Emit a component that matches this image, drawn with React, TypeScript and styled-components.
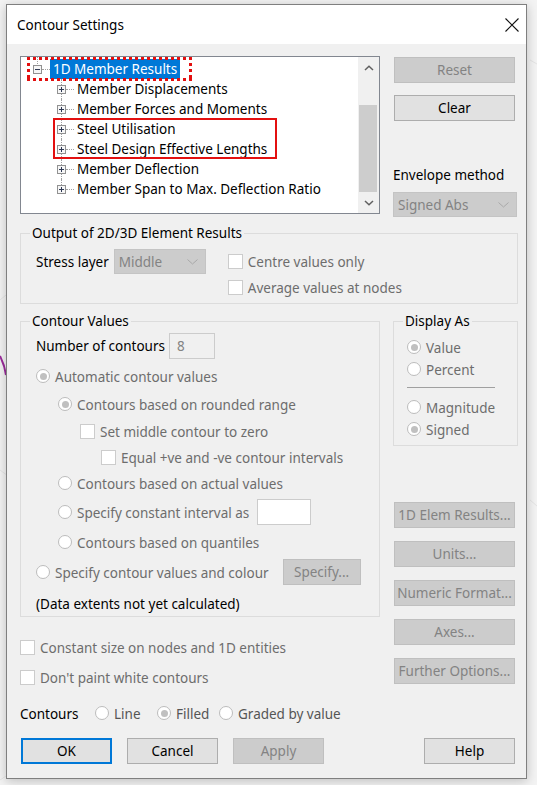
import styled, { createGlobalStyle, css } from "styled-components"

const GlobalStyle = createGlobalStyle`
  html, body {
    margin: 0;
    padding: 0;
  }
  body {
    background: #f3f3f3;
    font-family: "Noto Sans", "Open Sans", sans-serif;
    font-size: 13.5px;
    color: #000;
  }
  * {
    box-sizing: border-box;
  }
`

const treeItems = [
  "Member Displacements",
  "Member Forces and Moments",
  "Steel Utilisation",
  "Steel Design Effective Lengths",
  "Member Deflection",
  "Member Span to Max. Deflection Ratio",
]

const Expander = ({ open }: { open?: boolean }) => (
  <ExpanderBox width="9" height="9" viewBox="0 0 9 9">
    <rect x="0.5" y="0.5" width="8" height="8" fill="#f6f6f6" stroke="#919191" />
    <path d="M2 4.5h5" stroke="#2f3a55" />
    {!open && <path d="M4.5 2v5" stroke="#2f3a55" />}
  </ExpanderBox>
)

const Chevron = ({ up }: { up?: boolean }) => (
  <svg width="10" height="6" viewBox="0 0 10 6">
    <path
      d={up ? "M1 5L5 1.2L9 5" : "M1 1L5 4.8L9 1"}
      fill="none"
      stroke="#606060"
      strokeWidth="1.5"
    />
  </svg>
)

const SelectArrow = () => (
  <svg width="11" height="6" viewBox="0 0 11 6">
    <path d="M0.5 0.5L5.5 5L10.5 0.5" fill="none" stroke="#a8a8a8" strokeWidth="1" />
  </svg>
)

type OptionProps = {
  label: string
  checked?: boolean
  indent?: number
  h?: number
  width?: number
  dim?: boolean
  children?: React.ReactNode
}

const RadioOption = ({ label, checked, indent = 0, h = 22, width, dim = true, children }: OptionProps) => (
  <OptionRow $indent={indent} $h={h} $width={width}>
    <RadioMark $checked={checked} />
    <OptionText $dim={dim}>{label}</OptionText>
    {children}
  </OptionRow>
)

const CheckOption = ({ label, indent = 0, h = 20 }: OptionProps) => (
  <OptionRow $indent={indent} $h={h}>
    <CheckMark />
    <OptionText $dim>{label}</OptionText>
  </OptionRow>
)

export default function App() {
  return (
    <>
      <GlobalStyle />
      <Page>
        <Backdrop width="537" height="785" viewBox="0 0 537 785">
          <path d="M0 300L60 250M0 470L40 500M530 60L537 64M530 500L537 506M0 780L30 760" stroke="#e4e4e4" />
          <path d="M0 356C3 362 5 368 6 375" fill="none" stroke="#9a2b9a" strokeWidth="2" />
        </Backdrop>
        <Dialog>
          <TitleBar>
            <Title>Contour Settings</Title>
            <svg width="14" height="14" viewBox="0 0 14 14">
              <path d="M0.5 0.5L13.5 13.5M13.5 0.5L0.5 13.5" stroke="#111" strokeWidth="1.1" />
            </svg>
          </TitleBar>
          <Body>
            <TopRow>
              <Tree>
                <TreeList>
                  <TreeRow $indent={12} $root>
                    <Expander open />
                    <Connector />
                    <TreeLabel $selected>1D Member Results</TreeLabel>
                  </TreeRow>
                  {treeItems.map((item, i) => (
                    <TreeRow key={item} $indent={36} $last={i === treeItems.length - 1}>
                      <Expander />
                      <Connector />
                      <TreeLabel>{item}</TreeLabel>
                    </TreeRow>
                  ))}
                </TreeList>
                <ScrollBar>
                  <ScrollArrow>
                    <Chevron up />
                  </ScrollArrow>
                  <ScrollTrack>
                    <ScrollThumb />
                  </ScrollTrack>
                  <ScrollArrow>
                    <Chevron />
                  </ScrollArrow>
                </ScrollBar>
                <DottedMark />
                <BoxMark />
              </Tree>
              <SideColumn>
                <DlgButton disabled>Reset</DlgButton>
                <DlgButton $mt={12}>Clear</DlgButton>
                <FieldLabel $mt={44}>Envelope method</FieldLabel>
                <Select $w={124} $h={25} $mt={7}>
                  <span>Signed Abs</span>
                  <SelectArrow />
                </Select>
              </SideColumn>
            </TopRow>

            <OutputGroup>
              <Legend>Output of 2D/3D Element Results</Legend>
              <OutputContent>
                <StressRow>
                  <FieldLabel>Stress layer</FieldLabel>
                  <Select $w={92} $h={25}>
                    <span>Middle</span>
                    <SelectArrow />
                  </Select>
                </StressRow>
                <CheckColumn>
                  <CheckOption label="Centre values only" />
                  <CheckOption label="Average values at nodes" />
                </CheckColumn>
              </OutputContent>
            </OutputGroup>

            <MiddleRow>
              <LeftColumn>
                <ContourGroup>
                  <Legend>Contour Values</Legend>
                  <ContourContent>
                    <NumberRow>
                      <FieldLabel>Number of contours</FieldLabel>
                      <NumberBox>8</NumberBox>
                    </NumberRow>
                    <RadioOption label="Automatic contour values" checked />
                    <RadioOption label="Contours based on rounded range" checked indent={22} />
                    <CheckOption label="Set middle contour to zero" indent={44} />
                    <CheckOption label="Equal +ve and -ve contour intervals" indent={65} />
                    <RadioOption label="Contours based on actual values" indent={22} h={20} />
                    <RadioOption label="Specify constant interval as" indent={22} h={26}>
                      <IntervalBox />
                    </RadioOption>
                    <RadioOption label="Contours based on quantiles" indent={22} />
                    <RadioOption label="Specify contour values and colour" h={26}>
                      <SpecifyButton disabled>Specify...</SpecifyButton>
                    </RadioOption>
                    <NoteText>(Data extents not yet calculated)</NoteText>
                  </ContourContent>
                </ContourGroup>

                <BottomChecks>
                  <CheckOption label="Constant size on nodes and 1D entities" />
                  <CheckOption label="Don't paint white contours" />
                </BottomChecks>

                <ContoursRow>
                  <ContoursLabel>Contours</ContoursLabel>
                  <RadioOption label="Line" width={62} dim={false} />
                  <RadioOption label="Filled" checked width={62} dim={false} />
                  <RadioOption label="Graded by value" dim={false} />
                </ContoursRow>
              </LeftColumn>

              <SideColumn>
                <DisplayGroup>
                  <Legend>Display As</Legend>
                  <DisplayContent>
                    <RadioOption label="Value" checked />
                    <RadioOption label="Percent" />
                    <Separator />
                    <RadioOption label="Magnitude" />
                    <RadioOption label="Signed" checked />
                  </DisplayContent>
                </DisplayGroup>
                <DlgButton disabled $mt={56}>1D Elem Results...</DlgButton>
                <DlgButton disabled $mt={13}>Units...</DlgButton>
                <DlgButton disabled $mt={13}>Numeric Format...</DlgButton>
                <DlgButton disabled $mt={13}>Axes...</DlgButton>
                <DlgButton disabled $mt={13}>Further Options...</DlgButton>
              </SideColumn>
            </MiddleRow>

            <ButtonBar>
              <FooterButton $default>OK</FooterButton>
              <FooterButton>Cancel</FooterButton>
              <FooterButton disabled>Apply</FooterButton>
              <FooterButton $push>Help</FooterButton>
            </ButtonBar>
          </Body>
        </Dialog>
      </Page>
    </>
  )
}

const Page = styled.div`
  position: relative;
  width: 537px;
  height: 785px;
  overflow: hidden;
  padding: 4px 0 0 6px;
`

const Backdrop = styled.svg`
  position: absolute;
  left: 0;
  top: 0;
`

const Dialog = styled.div`
  position: relative;
  width: 521px;
  border: 1px solid #7f7f7f;
  background: #f0f0f0;
  box-shadow: 0 2px 10px rgba(0, 0, 0, 0.22);
`

const TitleBar = styled.div`
  height: 39px;
  background: #fff;
  display: flex;
  align-items: center;
  justify-content: space-between;
  padding: 0 7px 0 10px;
`

const Title = styled.div`
  font-size: 13.5px;
`

const Body = styled.div`
  padding: 12px 8px 14px 13px;
`

const TopRow = styled.div`
  display: flex;
  gap: 13px;
  align-items: flex-start;
`

const Tree = styled.div`
  position: relative;
  width: 360px;
  height: 158px;
  border: 1px solid #828790;
  background: #fff;
  display: flex;
`

const TreeList = styled.div`
  flex: 1;
  padding-top: 2px;
`

const TreeRow = styled.div<{ $indent: number; $root?: boolean; $last?: boolean }>`
  position: relative;
  height: 20px;
  display: flex;
  align-items: center;
  padding-left: ${(p) => p.$indent}px;
  white-space: nowrap;

  &::before {
    content: "";
    position: absolute;
    border-left: 1px dotted #a0a0a0;
    ${(p) =>
      p.$root
        ? css`
            left: 16px;
            top: -2px;
            height: 7px;
          `
        : css`
            left: 40px;
            top: 0;
            height: ${p.$last ? "10px" : "20px"};
          `}
  }
`

const ExpanderBox = styled.svg`
  position: relative;
  z-index: 1;
  flex-shrink: 0;
`

const Connector = styled.span`
  width: 8px;
  border-top: 1px dotted #a0a0a0;
`

const TreeLabel = styled.span<{ $selected?: boolean }>`
  height: 20px;
  line-height: 21px;
  padding: 0 3px;
  ${(p) =>
    p.$selected &&
    css`
      background: #0078d7;
      color: #fff;
    `}
`

const ScrollBar = styled.div`
  width: 21px;
  background: #f0f0f0;
  display: flex;
  flex-direction: column;
`

const ScrollArrow = styled.div`
  height: 21px;
  display: flex;
  align-items: center;
  justify-content: center;
`

const ScrollTrack = styled.div`
  flex: 1;
  display: flex;
  padding: 27px 2px 0 1px;
`

const ScrollThumb = styled.div`
  flex: 1;
  background: #cdcdcd;
`

const dots = (dir: string) =>
  `repeating-linear-gradient(${dir}, #e30f0f 0 3px, transparent 3px 6px)`

const DottedMark = styled.div`
  position: absolute;
  left: 6px;
  top: 0;
  width: 165px;
  height: 24px;
  pointer-events: none;
  background:
    ${dots("90deg")} top left / 100% 3px no-repeat,
    ${dots("90deg")} bottom left / 100% 3px no-repeat,
    ${dots("180deg")} top left / 3px 100% no-repeat,
    ${dots("180deg")} top right / 3px 100% no-repeat;
`

const BoxMark = styled.div`
  position: absolute;
  left: 32px;
  top: 61px;
  width: 224px;
  height: 41px;
  border: 2px solid #e31010;
  pointer-events: none;
`

const SideColumn = styled.div`
  width: 125px;
  display: flex;
  flex-direction: column;
  padding-top: 1px;
`

const buttonBase = css`
  font-family: inherit;
  font-size: 13.5px;
  padding: 0;
  white-space: nowrap;
  background: #e1e1e1;
  border: 1px solid #adadad;
  color: #000;

  &:disabled {
    background: #cccccc;
    border-color: #bfbfbf;
    color: #838383;
  }
`

const DlgButton = styled.button<{ $mt?: number }>`
  ${buttonBase}
  width: 121px;
  height: 26px;
  margin: ${(p) => p.$mt ?? 0}px 0 0 1px;
`

const FieldLabel = styled.div<{ $mt?: number }>`
  height: 20px;
  line-height: 21px;
  margin-top: ${(p) => p.$mt ?? 0}px;
  white-space: nowrap;
`

const Select = styled.div<{ $w: number; $h: number; $mt?: number }>`
  width: ${(p) => p.$w}px;
  height: ${(p) => p.$h}px;
  margin-top: ${(p) => p.$mt ?? 0}px;
  background: #cccccc;
  border: 1px solid #c4c4c4;
  color: #838383;
  display: flex;
  align-items: center;
  justify-content: space-between;
  padding: 0 7px 0 4px;
`

const Group = styled.fieldset`
  margin: 0;
  padding: 0;
  min-width: 0;
  border: 1px solid #dcdcdc;
`

const Legend = styled.legend`
  margin-left: 9px;
  padding: 0 2px;
  line-height: 16px;
  font-size: 13.5px;
`

const OutputGroup = styled(Group)`
  margin-top: 8px;
`

const OutputContent = styled.div`
  display: flex;
  align-items: flex-start;
  padding: 8px 0 6px 15px;
`

const StressRow = styled.div`
  display: flex;
  align-items: center;
  gap: 5px;
  height: 25px;
`

const CheckColumn = styled.div`
  display: flex;
  flex-direction: column;
  gap: 6px;
  margin: 2px 0 0 22px;
`

const OptionRow = styled.div<{ $indent: number; $h: number; $width?: number }>`
  display: flex;
  align-items: center;
  gap: 5px;
  height: ${(p) => p.$h}px;
  padding-left: ${(p) => p.$indent}px;
  white-space: nowrap;
  ${(p) =>
    p.$width &&
    css`
      width: ${p.$width}px;
    `}
`

const RadioMark = styled.span<{ $checked?: boolean }>`
  width: 14px;
  height: 14px;
  flex-shrink: 0;
  border: 1px solid #bcbcbc;
  border-radius: 50%;
  background: #fff;
  display: flex;
  align-items: center;
  justify-content: center;

  &::after {
    content: "";
    width: 7px;
    height: 7px;
    border-radius: 50%;
    background: ${(p) => (p.$checked ? "#c0c0c0" : "transparent")};
  }
`

const CheckMark = styled.span`
  width: 15px;
  height: 15px;
  flex-shrink: 0;
  border: 1px solid #cccccc;
  background: #fff;
`

const OptionText = styled.span<{ $dim?: boolean }>`
  color: ${(p) => (p.$dim ? "#6d6d6d" : "#555")};
  padding-top: 1px;
`

const MiddleRow = styled.div`
  display: flex;
  gap: 13px;
  margin-top: 9px;
  align-items: flex-start;
`

const LeftColumn = styled.div`
  width: 360px;
  display: flex;
  flex-direction: column;
`

const ContourGroup = styled(Group)``

const ContourContent = styled.div`
  display: flex;
  flex-direction: column;
  gap: 6px;
  padding: 4px 0 1px 15px;
`

const NumberRow = styled.div`
  display: flex;
  align-items: center;
  gap: 4px;
  height: 26px;
`

const NumberBox = styled.div`
  width: 46px;
  height: 26px;
  border: 1px solid #cccccc;
  background: #f0f0f0;
  color: #838383;
  padding: 2px 0 0 7px;
  line-height: 20px;
`

const IntervalBox = styled.div`
  width: 54px;
  height: 26px;
  margin-left: 3px;
  border: 1px solid #cccccc;
  background: #fff;
`

const SpecifyButton = styled.button`
  ${buttonBase}
  width: 78px;
  height: 26px;
  margin-left: 9px;
`

const NoteText = styled.div`
  height: 22px;
  line-height: 23px;
  margin-top: 2px;
`

const BottomChecks = styled.div`
  display: flex;
  flex-direction: column;
  gap: 10px;
  margin-top: 20px;
`

const ContoursRow = styled.div`
  display: flex;
  align-items: center;
  height: 22px;
  margin-top: 15px;
`

const ContoursLabel = styled.span`
  width: 75px;
  padding-top: 1px;
`

const DisplayGroup = styled(Group)`
  margin-top: -1px;
`

const DisplayContent = styled.div`
  display: flex;
  flex-direction: column;
  padding: 7px 0 5px 13px;
`

const Separator = styled.div`
  width: 88px;
  height: 1px;
  background: #a0a0a0;
  margin: 7px 0 8px;
`

const ButtonBar = styled.div`
  display: flex;
  gap: 15px;
  margin-top: 14px;
  padding: 0 3px 0 1px;
`

const FooterButton = styled.button<{ $default?: boolean; $push?: boolean }>`
  ${buttonBase}
  width: 91px;
  height: 26px;
  ${(p) =>
    p.$default &&
    css`
      border: 2px solid #0078d7;
    `}
  ${(p) =>
    p.$push &&
    css`
      margin-left: auto;
    `}
`
